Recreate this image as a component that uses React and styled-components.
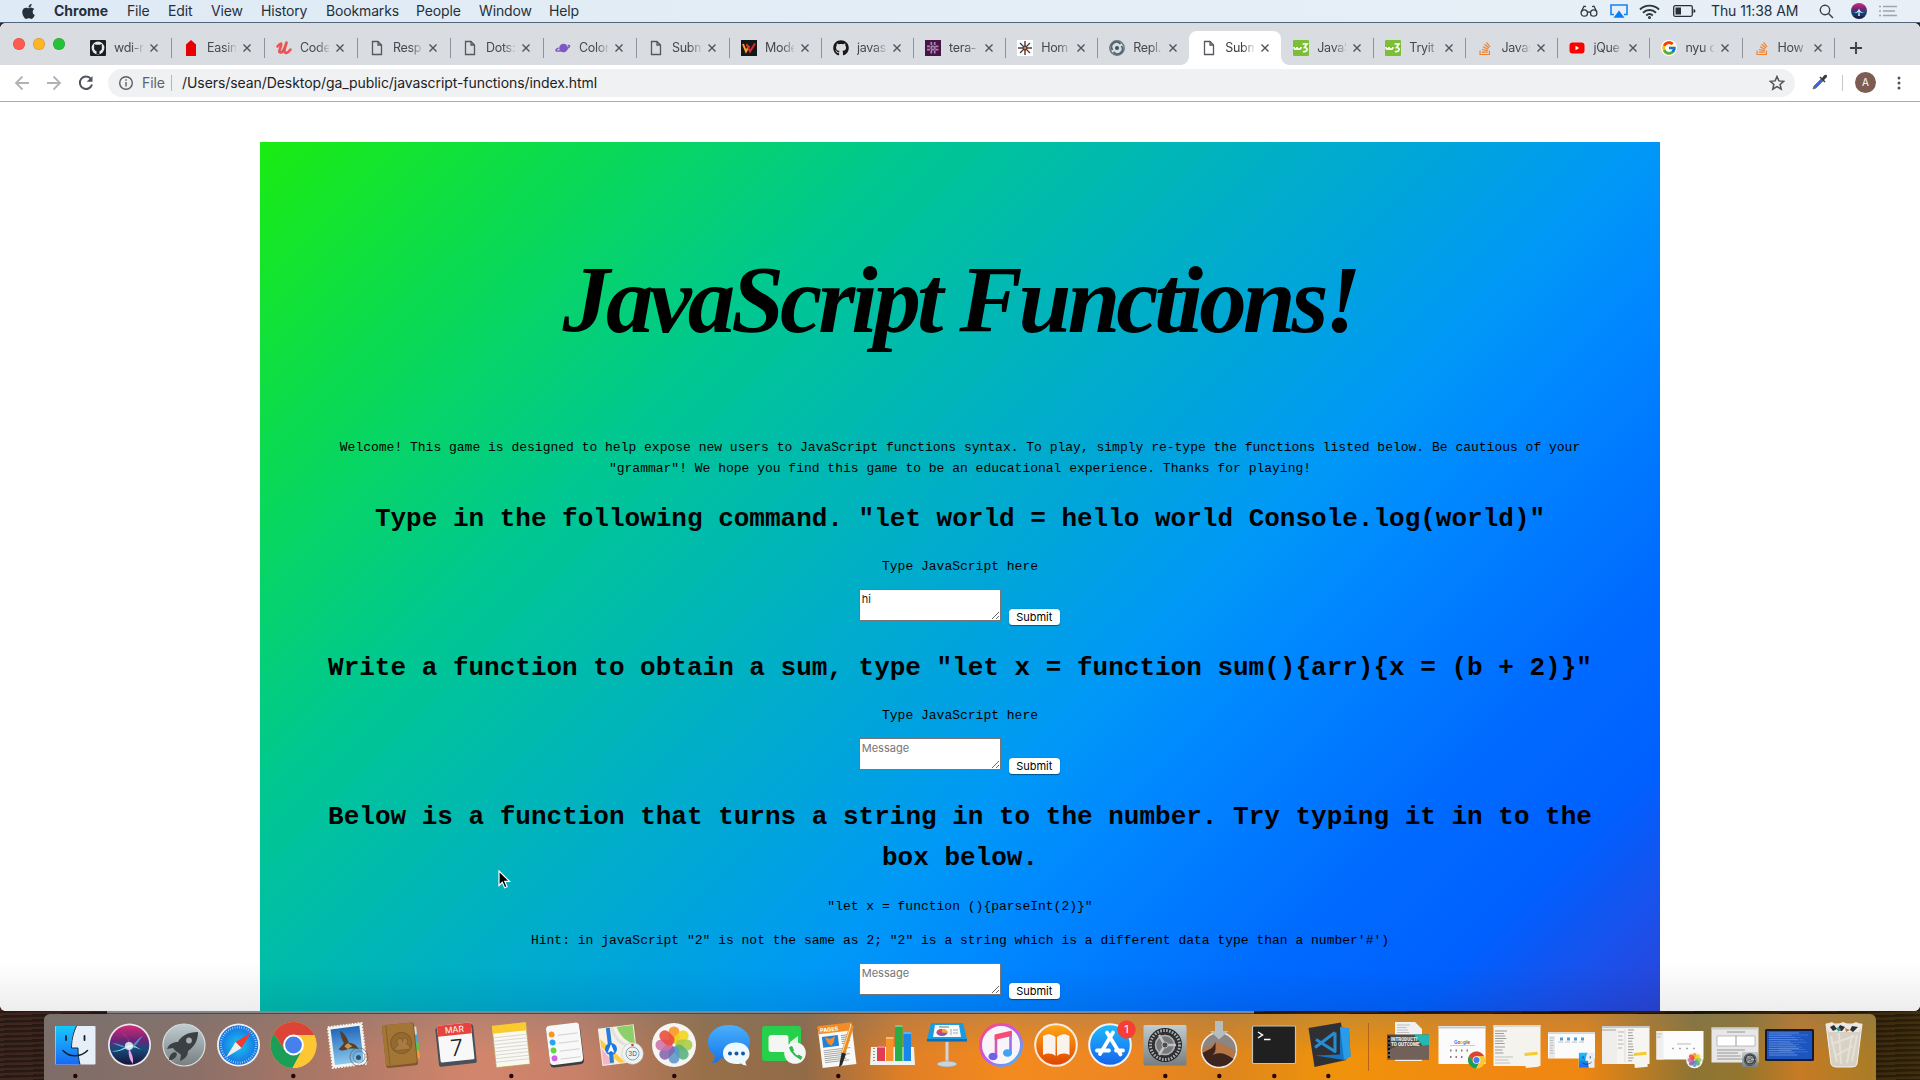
import React from "react";
import styled, { createGlobalStyle, css } from "styled-components";
import { FaApple, FaGithub, FaStackOverflow } from "react-icons/fa";
import { FcGoogle } from "react-icons/fc";

const sans = `Inter, Roboto, "Liberation Sans", sans-serif`;
const mono = `"Liberation Mono", "Courier New", monospace`;

const GlobalStyle = createGlobalStyle`
  * { box-sizing: border-box; }
  html, body { margin: 0; padding: 0; width: 1920px; height: 1080px; overflow: hidden; }
  svg { display: block; flex: none; }
`;

const Desktop = styled.div`
  width: 1920px;
  height: 1080px;
  display: flex;
  flex-direction: column;
  overflow: hidden;
  background:
    repeating-linear-gradient(178deg, rgba(0, 0, 0, 0.28) 0 2px, rgba(120, 70, 50, 0.12) 3px 5px),
    linear-gradient(90deg, #37231d 0, #2c1b16 160px, #3b2410 1100px, #241703 1600px, #2b2007 1800px, #3a2b0c 1920px);
  font-family: ${sans};
`;

const MenuBar = styled.header`
  height: 23px;
  flex: none;
  display: flex;
  align-items: center;
  padding: 0 23px 0 20px;
  border-bottom: 1px solid #50647a;
  background: linear-gradient(90deg, #deeaf5, #e3edf6 45%, #e8eff7);
  color: #25303c;
  font-size: 14px;
  line-height: 22px;
`;

const MenuItem = styled.span`
  width: ${(p) => p.$w}px;
  white-space: nowrap;
  font-weight: ${(p) => (p.$bold ? 700 : 400)};
  letter-spacing: ${(p) => p.$ls || 0}px;
`;

const Status = styled.div`
  margin-left: auto;
  display: flex;
  align-items: center;
`;

const Slot = styled.span`
  display: flex;
  width: ${(p) => p.$w}px;
  flex: none;
  align-items: center;
  white-space: nowrap;
`;

const Window = styled.section`
  height: 988px;
  flex: none;
  display: flex;
  flex-direction: column;
  overflow: hidden;
  border-radius: 6px;
  background: #fff;
`;

const TabStrip = styled.div`
  height: 42px;
  flex: none;
  display: flex;
  background: #d9dce1;
`;

const Lights = styled.div`
  width: 78px;
  flex: none;
  display: flex;
  gap: 8px;
  padding: 15px 0 0 13px;
`;

const Light = styled.i`
  width: 12px;
  height: 12px;
  border-radius: 50%;
  background: ${(p) => p.$c};
  box-shadow: inset 0 0 0 0.5px rgba(0, 0, 0, 0.2);
`;

const Tab = styled.div`
  width: ${(p) => p.$w}px;
  flex: none;
  display: flex;
  align-items: center;
  margin-top: 8px;
  height: 34px;
  padding: 0 10px 0 12px;
  position: relative;
  color: ${(p) => (p.$active ? "#3c4043" : "#45494e")};
  ${(p) =>
    p.$active &&
    css`
      background: #fff;
      border-radius: 8px 8px 0 0;
      &::before,
      &::after {
        content: "";
        position: absolute;
        bottom: 0;
        width: 8px;
        height: 8px;
      }
      &::before {
        left: -8px;
        background: radial-gradient(circle at 0 0, transparent 7.5px, #fff 8px);
      }
      &::after {
        right: -8px;
        background: radial-gradient(circle at 100% 0, transparent 7.5px, #fff 8px);
      }
    `}
`;

const TabTitle = styled.span`
  width: 29px;
  flex: none;
  margin: 0 7px 0 8px;
  white-space: nowrap;
  font-size: 12.5px;
  line-height: 18px;
  letter-spacing: -0.3px;
  mask-image: linear-gradient(90deg, #000 17px, rgba(0, 0, 0, 0.15) 29px);
`;

const Divider = styled.i`
  width: 1px;
  height: ${(p) => p.$h}px;
  margin: ${(p) => p.$m || "0"};
  flex: none;
  background: ${(p) => p.$c || "#8f9399"};
`;

const TabEdge = styled(Divider)`
  position: absolute;
  right: -1px;
  top: 7px;
`;

const NewTab = styled.div`
  padding: 19px 0 0 16px;
`;

const Toolbar = styled.div`
  height: 37px;
  flex: none;
  display: flex;
  align-items: center;
  padding: 0 14px 1px;
  border-bottom: 1px solid #a9abad;
`;

const NavIcons = styled.div`
  width: 94px;
  display: flex;
  gap: 16px;
`;

const AddressBar = styled.div`
  width: 1687px;
  height: 28px;
  display: flex;
  align-items: center;
  padding: 0 10px;
  border-radius: 14px;
  background: #eff1f3;
  font-size: 14px;
  color: #202124;
`;

const Scheme = styled.span`
  width: 29px;
  margin-left: 8px;
  color: #5f6368;
  letter-spacing: -0.1px;
`;

const Url = styled.span`
  flex: 1;
  margin-left: 10px;
  letter-spacing: ${(p) => p.$ls}px;
`;

const Avatar = styled.span`
  width: 21px;
  height: 21px;
  margin: 0 21px 0 12px;
  border-radius: 50%;
  background: #7d5d52;
  color: #fff;
  font-size: 10px;
  line-height: 21px;
  text-align: center;
`;

const Viewport = styled.main`
  flex: 1;
  min-height: 0;
  overflow: hidden;
  display: flex;
  justify-content: center;
  padding-top: 40px;
  background: linear-gradient(#fff 860px, #ededed 909px);
`;

const Game = styled.article`
  width: 1400px;
  height: 1400px;
  flex: none;
  text-align: center;
  color: #000;
  font-family: ${mono};
  background:
    linear-gradient(transparent 825px, rgba(0, 0, 0, 0.07) 869px),
    linear-gradient(135deg, #1aec12 0, #09d85a 260px, #00c890 460px, #00bbac 600px, #00b0c4 720px, #00a4dc 850px, #0099f6 975px, #0088ff 1090px, #006aff 1300px, #0060ff 1430px, #1b50ea 1530px, #2c42d2 1620px);
`;

const Title = styled.h1`
  margin: 0;
  height: 296px;
  padding-top: 100px;
  font: italic 700 95px/116px "Liberation Serif", serif;
  letter-spacing: ${(p) => p.$ls}px;
  white-space: nowrap;
`;

const Text = styled.p`
  margin: 0 0 13px;
  font-size: 13px;
  line-height: 20.8px;
`;

const Question = styled.h2`
  margin: 19px 0 17px;
  font-size: 26px;
  font-weight: 700;
  line-height: 41.6px;
`;

const Answer = styled.form`
  display: flex;
  justify-content: center;
  align-items: flex-end;
  height: 36.3px;
  gap: 8px;
  margin: -2px 0 22.3px;
  padding-right: 1.5px;
`;

const Field = styled.textarea`
  width: 142px;
  height: 32px;
  margin: 0 0 4px;
  padding: 2px;
  border: 1px solid #767676;
  border-radius: 0;
  background: #fff;
  color: #222;
  font: 11px/14px ${sans};
  overflow: hidden;
  &::placeholder { color: #757575; }
`;

const Submit = styled.button`
  width: 51px;
  height: 16px;
  padding: 0;
  border: 0;
  border-radius: 3.5px;
  background: #fff;
  box-shadow: 0 0.5px 1px rgba(0, 0, 0, 0.45);
  color: #000;
  font: 11px/16px ${sans};
`;

const Shelf = styled.div`
  height: 3px;
  flex: none;
  margin: 0 666px 0 107px;
  border-bottom: 1px solid #494a4c;
  background: #83868a;
`;

const Dock = styled.footer`
  width: 1832px;
  height: 66px;
  flex: none;
  display: flex;
  margin-left: 44px;
  padding-left: 3.75px;
  border-radius: 6px 6px 0 0;
  overflow: hidden;
  background:
    linear-gradient(rgba(110, 120, 120, 0.3), transparent 60%),
    linear-gradient(90deg, #7d6d68 0, #8b7068 150px, #ac7766 280px, #d2866c 430px, #c9816a 530px, #987048 660px, #916a48 760px, #e07f26 860px, #f48a1e 960px, #ed8723 1080px, #dd851e 1180px, #f0930a 1290px, #f08812 1450px, #ee8612 1540px, #8d7434 1650px, #94762d 1700px, #c77b24 1755px, #a87c27 1832px);
`;

const DockItem = styled.div`
  width: 54.5px;
  flex: none;
`;

const DockGap = styled.div`
  width: 25.2px;
  flex: none;
  display: flex;
  justify-content: center;
  padding-top: 9px;
`;

const Pointer = styled.div`
  position: absolute;
  left: 498px;
  top: 870px;
`;

/* ---------- favicons ---------- */
const FileIcon = () => (
  <svg width="16" height="16" viewBox="0 0 16 16" fill="none" stroke="#55595e" strokeWidth="1.3">
    <path d="M3.5 1.5h5.5l3.5 3.5v9.5h-9zM9 1.5V5h3.5" />
  </svg>
);
const StackIcon = () => <FaStackOverflow size={15} color="#f0812d" style={{ width: 16 }} />;
const W3Icon = () => (
  <svg width="16" height="16" viewBox="0 0 16 16">
    <rect width="16" height="16" rx="1" fill="#7cbf36" />
    <path d="M1 7c0 3 3 3 3 0 0 3 4 3 4 0M9.5 4h4.5l-2.5 3.5c4 0 3.5 5-1.5 4" fill="none" stroke="#fff" strokeWidth="1.6" />
  </svg>
);
const favicons = {
  gitBox: () => (
    <svg width="16" height="16" viewBox="0 0 16 16">
      <rect width="16" height="16" rx="1" fill="#1c1e21" />
      <circle cx="8" cy="8" r="6.4" fill="#e8e8e8" />
      <path d="M4.2 4l1.8.8h4L11.8 4v3c.7 3-1.4 3.8-2.3 4v3.2h-3V11C5 10.800 3.500 9.500 4.200 7z" fill="#1c1e21" />
    </svg>
  ),
  red: () => (
    <svg width="16" height="16" viewBox="0 0 16 16"><path d="M3 16V4.500L8 0l5 4.500V16z" fill="#e60000" /></svg>
  ),
  udemy: () => (
    <svg width="16" height="16" viewBox="0 0 16 16" fill="none" stroke="#ec5252" strokeWidth="2.500" strokeLinecap="round">
      <path d="M1.500 6.500C4 3 6 2.500 5 6c-1.500 4-3 7 0 6.500 3-1 4-6 5.500-10M10.500 3c-2 6-3 10-.5 10 1.500 0 3-1.500 4.500-3.500" />
    </svg>
  ),
  file: FileIcon,
  planet: () => (
    <svg width="16" height="16" viewBox="0 0 16 16">
      <circle cx="8.500" cy="8" r="4.300" fill="#7e57c2" />
      <path d="M3.500 8C-1 10.500.5 12 7 10.500S17 5 12.800 5.600" fill="none" stroke="#7e57c2" strokeWidth="1.500" />
    </svg>
  ),
  w: () => (
    <svg width="16" height="16" viewBox="0 0 16 16">
      <rect width="16" height="16" fill="#151719" />
      <path d="M2 4l3 7.500L8 6" fill="none" stroke="#f9a32a" strokeWidth="2" />
      <path d="M5.500 4L9 11.500 14 3.500" fill="none" stroke="#e32b2b" strokeWidth="2" />
    </svg>
  ),
  git: () => <FaGithub size={16} color="#191717" />,
  slack: () => (
    <svg width="16" height="16" viewBox="0 0 16 16">
      <rect width="16" height="16" fill="#481449" />
      <path d="M6.300 2v12M9.700 2v12M2 6.300h12M2 9.700h12" stroke="#a988aa" strokeWidth="1.700" strokeDasharray="3 1.200" />
    </svg>
  ),
  star: () => (
    <svg width="16" height="16" viewBox="0 0 16 16">
      <rect width="16" height="16" fill="#fff" />
      <path d="M8 1v14M1 8h14" stroke="#6b3733" strokeWidth="1.500" />
      <path d="M3 3l10 10M13 3L3 13" stroke="#343d50" strokeWidth="1.300" />
      <circle cx="8" cy="8" r="2" fill="#c9823a" stroke="#333" />
    </svg>
  ),
  repl: () => (
    <svg width="16" height="16" viewBox="0 0 16 16" fill="none">
      <circle cx="8" cy="8" r="7.200" stroke="#667881" strokeWidth="1.500" />
      <path d="M3.500 10a5 5 0 0 1 8-6M12.500 6a5 5 0 0 1-8 6" stroke="#526771" strokeWidth="2" />
      <circle cx="8" cy="8" r="2" fill="#3d525c" />
    </svg>
  ),
  w3: W3Icon,
  stack: StackIcon,
  youtube: () => (
    <svg width="16" height="16" viewBox="0 0 16 16">
      <rect x=".5" y="2.500" width="15" height="11" rx="3" fill="#f00" />
      <path d="M6.500 5.800v4.400L10.200 8z" fill="#fff" />
    </svg>
  ),
  google: () => (
    <Slot $w={16}><FcGoogle size={16} style={{ background: "#fff", borderRadius: "50%" }} /></Slot>
  ),
};

const tabs = [
  ["gitBox", "wdi-r"], ["red", "Easin"], ["udemy", "Code"], ["file", "Resp"], ["file", "Dots:"],
  ["planet", "Color"], ["file", "Subm"], ["w", "Mode"], ["git", "javas"], ["slack", "tera-"],
  ["star", "Hom"], ["repl", "Repl."], ["file", "Subm"], ["w3", "JavaS"], ["w3", "Tryit"],
  ["stack", "Javas"], ["youtube", "jQue"], ["google", "nyu c"], ["stack", "How"],
];

const CloseIcon = () => (
  <svg width="8" height="8" viewBox="0 0 8 8" stroke="#4f5358" strokeWidth="1.400">
    <path d="M.5.5l7 7M7.500.5l-7 7" />
  </svg>
);

/* ---------- dock artwork, drawn on a 54 x 66 cell ---------- */
const Cell = ({ children, dot }) => (
  <svg width="54" height="66" viewBox="0 0 54 66">
    {children}
    {dot && <circle cx="27.300" cy="62" r="2.200" fill="#250505" />}
  </svg>
);

const FinderArt = () => (
  <g>
    <rect x="7" y="12" width="40.500" height="38.500" rx="1" fill="#e6eef8" />
    <path d="M7.500 12H28c-4 8-5 16-5 22h7c0 6 .5 11 2 16.500H7.500z" fill="url(#finder)" />
    <path d="M28.500 12c-4 8-5 16-5 22h6.500c0 6 .5 11 2 16.500" fill="none" stroke="#12283d" strokeWidth="1" />
    <path d="M18 22v4M36.500 22v4" stroke="#102030" strokeWidth="1.800" strokeLinecap="round" />
    <path d="M15 36.500c6 7 18 7 24.500 0" fill="none" stroke="#102030" strokeWidth="1.500" strokeLinecap="round" />
  </g>
);

const ChromeArt = ({ cx = 27.5, cy = 31, s = 1 }) => (
  <g transform={`translate(${cx} ${cy}) scale(${s})`}>
    <circle r="23" fill="#fbc02d" />
    <path d="M-19.900-11.500A23 23 0 0 1 19.900-11.500 23 23 0 0 1 20.700-10H0L-8.700 5z" fill="#dc4437" />
    <path d="M-19.900-11.500A23 23 0 0 0-1 23L8.700 5-8.700 5z" fill="#1b9e58" />
    <path d="M-1 23A23 23 0 0 0 20.700-10H0L8.700 5z" fill="#fdc734" />
    <circle r="10.400" fill="#fff" />
    <circle r="8.400" fill="#4580ee" />
  </g>
);

const petals = ["#f7941e", "#f0d51b", "#a8cb45", "#55b37a", "#5b96c9", "#8364ae", "#cf6fa7", "#eb4b3c"];
const PhotosArt = ({ cx = 27, cy = 31, s = 1 }) => (
  <g transform={`translate(${cx} ${cy}) scale(${s})`}>
    <circle r="22" fill="#f5f5f3" />
    {petals.map((c, i) => (
      <rect key={c} x="-5.500" y="-18.500" width="11" height="17" rx="5.500" fill={c} opacity=".88" transform={`rotate(${i * 45})`} />
    ))}
  </g>
);

const GearArt = ({ cx = 27, cy = 31, s = 1 }) => (
  <g transform={`translate(${cx} ${cy}) scale(${s})`}>
    <rect x="-21.500" y="-20" width="43" height="40.500" rx="1.500" fill="url(#steel)" />
    <circle r="17" fill="#222426" />
    <circle r="14.500" fill="none" stroke="#aaa" strokeWidth="3" strokeDasharray="1.700 1.300" />
    <circle r="11.500" fill="#77797b" stroke="#303234" strokeWidth="2.500" />
    <circle r="9.500" fill="none" stroke="#b0b2b4" strokeWidth="1.500" />
    <path d="M0 0H11M0 0L-6-10M0 0L-6 10" stroke="#c0c2c4" strokeWidth="2.500" />
    <circle r="3" fill="#4b4d50" stroke="#bbb" />
  </g>
);

const NoteBadge = ({ x, y }) => (
  <g transform={`translate(${x} ${y}) rotate(-5)`}>
    <rect width="13" height="15" fill="#f5f4ed" />
    <rect width="13" height="3" fill="#f7cb2f" />
  </g>
);

const Lines = ({ x, y, n, w, gap = 3, c = "#aaa" }) => (
  <path
    d={Array.from({ length: n }, (_, i) => `M${x} ${y + i * gap}h${w - ((i * 5) % 7) * (w / 20)}`).join("")}
    stroke={c}
    strokeWidth=".7"
  />
);

const apps = [
  { dot: true, art: <FinderArt /> },
  {
    art: (
      <g>
        <circle cx="27.500" cy="31" r="21.500" fill="#e9e9ef" />
        <circle cx="27.500" cy="31" r="19.800" fill="url(#siri)" />
        <path d="M9 37c10 1 15-6 20-6s8 5 16 6c-7-1-10-4-16-4s-10 6-20 4z" fill="#8df5ee" />
        <path d="M20 19c6 3 7 8 7 13s5 8 4 18c-4-5-5-10-4-17s-2-11-7-14z" fill="#eba3e3" />
        <path d="M10 29c8 0 12 5 18 3s7-8 13-10c-5 5-7 12-13 12s-12-2-18-5z" fill="#53a8e8" opacity=".75" />
        <circle cx="27" cy="32" r="4" fill="#fff" opacity=".8" />
      </g>
    ),
  },
  {
    art: (
      <g>
        <circle cx="27" cy="31" r="21" fill="url(#steel)" stroke="#dce0e2" strokeWidth="1.200" />
        <path d="M41 18c-10 0-17 4-20 10-5 0-9 2-11 7l6-1c1 1 2 3 4 4s3 2 4 3l-1 6c5-2 8-5 8-10 6-4 10-10 10-19z" fill="#3b4043" />
        <circle cx="32" cy="26.500" r="2.900" fill="#a7afb2" />
        <path d="M18 38c-4 1-6 4-6 8 4 0 7-2 8-6z" fill="#3b4043" />
      </g>
    ),
  },
  {
    art: (
      <g>
        <circle cx="27.500" cy="31" r="21.500" fill="#eef1f3" />
        <circle cx="27.500" cy="31" r="19.700" fill="url(#safari)" />
        <circle cx="27.500" cy="31" r="17.700" fill="none" stroke="#b9e3fa" strokeWidth="2.200" strokeDasharray=".7 1.620" />
        <path d="M40 18.500L30.500 34 24.500 28z" fill="#f13a32" />
        <path d="M15 43.500L30.500 34 24.500 28z" fill="#eee" />
      </g>
    ),
  },
  { dot: true, art: <ChromeArt /> },
  {
    art: (
      <g>
        <g transform="rotate(-7 27 30)">
          <rect x="10" y="11" width="34" height="41" fill="#f4f4f1" stroke="#f4f4f1" strokeWidth="2" strokeDasharray="1.800 1.200" />
          <rect x="12.500" y="13.500" width="29" height="36" fill="url(#mail)" />
          <path d="M22 16c4 3 6 8 7 13 5 1 8 4 9 8-4-2-7-2-10-2-4 1-7 2-10-1 3-2 4-3 6-5-1-4-3-8-2-13z" fill="#5a3f24" />
          <path d="M24 32l4-3 4 4-5 2z" fill="#c49752" />
        </g>
        <circle cx="39" cy="43" r="9" fill="none" stroke="#55606a" strokeOpacity=".65" />
        <circle cx="39" cy="43" r="6" fill="none" stroke="#55606a" strokeOpacity=".55" />
        <circle cx="38.500" cy="43.500" r="2.500" fill="#35506d" />
      </g>
    ),
  },
  {
    art: (
      <g transform="rotate(-6 27 31)">
        <path d="M39 14h4v9h-4z" fill="#d3d9dc" /><path d="M39 22h4.500v8H39z" fill="#3fa9de" />
        <path d="M39 30h4.500v8H39z" fill="#4fca57" /><path d="M39 38h4.500v8H39z" fill="#efa126" />
        <rect x="9" y="9.500" width="32" height="43" rx="2.500" fill="#7e5728" />
        <rect x="9" y="9.500" width="31" height="41" rx="2.500" fill="#a37636" />
        <path d="M13 10v40" stroke="#85602d" />
        <circle cx="26.500" cy="29" r="10.500" fill="#956a31" stroke="#815b29" />
        <path d="M19 36c0-4 4-4 4-6-3-5 5-9 5-2 0-7 7-3 4 2 0 2 3 2 3 6z" fill="#a87b42" stroke="#7d5728" strokeWidth=".7" />
      </g>
    ),
  },
  {
    art: (
      <g transform="rotate(-6 27 31)">
        <rect x="8" y="12" width="38" height="39" rx="2" fill="#48505a" />
        <rect x="10" y="10" width="34" height="37" rx="1.500" fill="#f8f8f8" />
        <path d="M10 11.500q0-1.500 1.500-1.500h31q1.500 0 1.500 1.500V21H10z" fill="#e7433d" />
        <text x="27" y="18.500" fontFamily="Inter, sans-serif" fontSize="8.500" textAnchor="middle" fill="#fff">MAR</text>
        <text x="27.500" y="42" fontFamily="Inter, sans-serif" fontSize="23" fontWeight="300" textAnchor="middle" fill="#222">7</text>
      </g>
    ),
  },
  {
    dot: true,
    art: (
      <g transform="rotate(-6 27 31)">
        <rect x="10" y="10" width="34" height="42" fill="#f9f8f1" stroke="#b79b46" strokeWidth=".7" />
        <rect x="10" y="10" width="34" height="8" fill="#fbca2c" />
        <path d="M10 22h34M10 25.500h34M10 29h34M10 32.500h34M10 36h34M10 39.500h34M10 43h34M10 46.500h34" stroke="#d0d0ce" strokeWidth=".8" />
      </g>
    ),
  },
  {
    art: (
      <g transform="rotate(-7 27 31)">
        <rect x="10" y="11" width="34" height="41" rx="4" fill="#3c3d40" />
        <rect x="10" y="10" width="33.500" height="39.500" rx="4" fill="#f8f8f8" />
        <circle cx="15" cy="19" r="3" fill="#fd9420" /><circle cx="15" cy="27" r="3" fill="#29a5ef" />
        <circle cx="15" cy="35" r="3" fill="#5dd742" /><circle cx="15" cy="43" r="3" fill="#cb65e7" />
        <path d="M21 20.500h20M21 28.500h20M21 36.500h20M21 44.500h20" stroke="#c9c9c9" strokeWidth=".8" />
      </g>
    ),
  },
  {
    art: (
      <g>
        <g transform="rotate(-7 24 31)">
          <rect x="7" y="12.500" width="36" height="37.500" fill="#f5f0e5" />
          <path d="M26 13h16v19c-7-2-14-9-16-19z" fill="#8cd06a" />
          <path d="M8 20v12l11 17H8z" fill="#f6b6c4" /><path d="M8 23l22 26h-6L8 31z" fill="#ffcc3f" />
          <path d="M15 13v35h4V13z" fill="#277ed8" /><path d="M21 13c1 12 9 20 22 23" stroke="#e3e1dc" strokeWidth="3" fill="none" />
        </g>
        <circle cx="18" cy="35" r="6" fill="#1c78e6" /><path d="M18 30l3.500 9-3.500-2-3.500 2z" fill="#fff" />
        <circle cx="39.500" cy="39.500" r="10.700" fill="#f0f1f2" stroke="#c4c6c8" strokeWidth=".6" />
        <circle cx="39.500" cy="39.500" r="6.500" fill="none" stroke="#86a5b0" />
        <text x="39.500" y="42" fontFamily="Inter, sans-serif" fontSize="6.500" textAnchor="middle" fill="#555">3D</text>
        <circle cx="39.500" cy="31" r="1.300" fill="#e23b32" />
      </g>
    ),
  },
  { dot: true, art: <PhotosArt /> },
  {
    art: (
      <g>
        <path d="M27 11c12 0 21 7.500 21 17s-9 17-21 17c-3 0-5 0-8-1-2 3-5 5-9 5 2-2 3-5 3-8-5-3-7-8-7-13 0-9.500 9-17 21-17z" fill="url(#bubble)" />
        <path d="M34 28.500c8 0 13.500 4.500 13.500 11 0 3-1 5.500-4 8 0 2 .5 3 1.500 4-3 0-4.500-1-6-2-9 2-18-2-18-10 0-6.500 5-11 13-11z" fill="#eef8ff" />
        <circle cx="28" cy="39.500" r="2" fill="#145aa5" /><circle cx="34.500" cy="39.500" r="2" fill="#145aa5" /><circle cx="41" cy="39.500" r="2" fill="#145aa5" />
      </g>
    ),
  },
  {
    art: (
      <g>
        <rect x="6" y="12" width="39" height="35" rx="3" fill="#27d04c" />
        <rect x="12.500" y="21" width="20" height="17" rx="3" fill="#f4f6f3" /><path d="M34 28l8-6v14l-8-5z" fill="#e3f0e2" />
        <circle cx="39" cy="39" r="10.800" fill="#f5f5f5" />
        <path d="M34.500 33.500c2 6 5 9 10 10.500" fill="none" stroke="#29bd48" strokeWidth="2" />
        <path d="M33.500 33.500l2.500-1 1.500 4-2 1.500zM41 42.500l1.500-1.500 3.500 2-1.500 2.500z" fill="#29bd48" stroke="#29bd48" strokeLinejoin="round" />
      </g>
    ),
  },
  {
    dot: true,
    art: (
      <g>
        <g transform="rotate(-7 27 31)">
          <rect x="9" y="11" width="34" height="41" fill="#f8f8f6" /><rect x="9" y="10" width="34" height="8" fill="#f28c28" />
          <text x="11" y="16.500" fontFamily="Inter, sans-serif" fontSize="5.500" fontWeight="700" fill="#fff">PAGES</text>
          <rect x="12" y="21" width="16" height="11" fill="#2382d4" /><path d="M15 22l5 2 5-2-2 6-3 3-3-3z" fill="#f58a2b" />
          <Lines x={31} y={22} n={5} w={9} gap={2} c="#777" /><Lines x={12} y={35} n={7} w={27} gap={2} c="#888" />
        </g>
        <path d="M39 10l4 2-9 29-4 8 0-10z" fill="#e88e25" /><path d="M31 38l4 2-4 11-3 2 1-6z" fill="#282828" /><path d="M39 10l1 1-9 28" fill="none" stroke="#ffe0a0" />
      </g>
    ),
  },
  {
    art: (
      <g>
        <path d="M6 33h43l1 18H5z" fill="#f1f1ef" /><path d="M9 34v15" stroke="#777" strokeWidth="1.500" strokeDasharray="1 2" />
        <rect x="12" y="32" width="8" height="15" fill="#e13c52" /><rect x="21" y="23" width="7.500" height="24" fill="#f6922b" />
        <rect x="30" y="11" width="7.500" height="36" fill="#28ae47" /><rect x="38.500" y="18" width="7.500" height="29" fill="#1887e8" />
        <path d="M12 32h8v2h-8zM21 23h7.500v2H21zM30 11h7.500v2H30zM38.500 18H46v2h-7.500z" fill="#fff" opacity=".35" />
      </g>
    ),
  },
  {
    art: (
      <g>
        <path d="M11 9h32l4 16H7z" fill="#199be0" /><path d="M7 25h40v2.500H7z" fill="#0c6db0" />
        <path d="M15 11h24l2 12H13z" fill="#f6f9fa" /><path d="M19 13h10" stroke="#777" />
        <ellipse cx="22" cy="18.500" rx="5.500" ry="3.500" fill="#8a54bd" /><path d="M22 18.500v-3.500c4 0 6 2 5.500 4z" fill="#f6a82c" /><path d="M22 18.500l-5 1c-1-3 2-4.500 5-4.500z" fill="#e74457" />
        <path d="M31 15v6M33 16h5M33 19h5" stroke="#aaa" />
        <path d="M25.500 28h3v22h-3z" fill="#cfd5da" /><ellipse cx="27" cy="50" rx="10" ry="3" fill="#cbd3d9" stroke="#8f989e" strokeWidth=".6" />
      </g>
    ),
  },
  {
    art: (
      <g>
        <circle cx="27" cy="31" r="20.500" fill="#f7f5f9" stroke="url(#tunes)" strokeWidth="3" />
        <path d="M36.500 18v21" stroke="#9a6fe8" strokeWidth="2.600" /><path d="M22 21v21" stroke="#d458b0" strokeWidth="2.600" />
        <path d="M20.700 20.500l17.100-4v5.500l-17.100 4z" fill="#f64d77" />
        <ellipse cx="19" cy="42.500" rx="4.500" ry="3.800" fill="#7160ed" /><ellipse cx="33.500" cy="39" rx="4.500" ry="3.800" fill="#40a3f3" />
      </g>
    ),
  },
  {
    art: (
      <g>
        <circle cx="27" cy="31" r="20.800" fill="url(#books)" stroke="#f6eee5" strokeWidth="2" />
        <path d="M14 22c5-3 9-2 12.500 1v19c-4-3-8-3-12.500-1zM40.500 22c-5-3-9-2-12.500 1v19c4-3 8-3 12.500-1z" fill="#f8f3ec" />
      </g>
    ),
  },
  {
    art: (
      <g>
        <circle cx="27" cy="31" r="20.800" fill="url(#store)" stroke="#edf5fb" strokeWidth="2" />
        <path d="M24 18.500l13.500 22M30 18.500L17 40M14 36.500h12M33 36.500h7" stroke="#fff" strokeWidth="3.800" strokeLinecap="round" />
        <circle cx="43.500" cy="15.500" r="9.200" fill="#f63e36" />
        <text x="43.500" y="19.300" fontFamily="Inter, sans-serif" fontSize="11" textAnchor="middle" fill="#fff">1</text>
      </g>
    ),
  },
  { dot: true, art: <GearArt /> },
  {
    dot: true,
    art: (
      <g>
        <circle cx="27" cy="36" r="17.500" fill="#8b8583" stroke="#eeeae7" strokeWidth="1.500" />
        <path d="M10.200 35c5-2 9-3 13-7 7 1 14 5 20.500 9a17 17 0 0 1-33 2z" fill="#b57648" />
        <path d="M10.500 39c6-4 10-3 13-11 0 6 1 10-3 13 7-3 13-2 21 4-8 11-26 11-31-6z" fill="#3d251d" />
        <path d="M23 7h8v10h5.500L27 25.500 18 17h5z" fill="#b6bdbf" />
      </g>
    ),
  },
  {
    dot: true,
    art: (
      <g>
        <rect x="5.500" y="12" width="43" height="37.500" rx="1" fill="#202020" stroke="#c6c2b8" strokeWidth="1.200" />
        <path d="M11 18l4.500 3-4.500 3" fill="none" stroke="#fff" strokeWidth="1.500" /><path d="M17 25.500h6.500" stroke="#fff" strokeWidth="1.500" />
      </g>
    ),
  },
  {
    dot: true,
    art: (
      <g>
        <path d="M7.500 14L40 8.500 45 46 13.500 53z" fill="#303034" />
        <path d="M39 13l9 1.500 1.500 28L43 46l-29-4.500 25-1z" fill="#1476c4" /><path d="M39 13l9 1.500 1.500 28L43 46z" fill="#289be9" />
        <path d="M34 18.500v19L15 25.500M34 18.500L14 33.500" fill="none" stroke="#268dd2" strokeWidth="3" strokeLinejoin="round" />
      </g>
    ),
  },
];

const recents = [
  <g key="doc">
    <path d="M14 8h20l7 7v32H14z" fill="#eff0ef" /><Lines x={16} y={11} n={4} w={13} gap={2.5} />
    <rect x="6" y="20.500" width="42" height="25" fill="#514b48" /><path d="M33 20.500h15v20z" fill="#25b7b2" />
    <path d="M6 37l14-7 10 3 18-2v14.500H6z" fill="#716158" /><path d="M8 22v22" stroke="#111" strokeWidth="2" strokeDasharray="2 2" />
    <text x="10" y="27" fontFamily="Roboto, sans-serif" fontSize="4.500" fontWeight="900" fill="#eee">INTRODUCTI</text>
    <text x="10" y="32" fontFamily="Roboto, sans-serif" fontSize="4.500" fontWeight="900" fill="#eee">TO OUTCOME</text>
  </g>,
  <g key="google">
    <rect x="3.500" y="12" width="47" height="38" fill="#fbfbfb" /><path d="M3.500 13.500h47" stroke="#c7c9cc" strokeWidth="2" />
    <text x="27" y="29.500" fontFamily="Roboto, sans-serif" fontSize="5" fontWeight="700" textAnchor="middle"><tspan fill="#4285f4">G</tspan><tspan fill="#ea4335">o</tspan><tspan fill="#fbbc05">o</tspan><tspan fill="#4285f4">g</tspan><tspan fill="#34a853">l</tspan><tspan fill="#ea4335">e</tspan></text>
    <path d="M15 31.500h25" stroke="#ccc" /><path d="M15 36.500h22M15 43h15" stroke="#8f7777" strokeWidth="1.800" strokeDasharray="1.500 4" />
    <ChromeArt cx={41.5} cy={46} s={0.37} />
  </g>,
  <g key="note1">
    <rect x="3.500" y="11" width="47" height="41" fill="#f4f3ee" /><path d="M3.500 12h47" stroke="#d9d8d3" strokeWidth="2" />
    <Lines x={5} y={17} n={6} w={12} gap={2.5} c="#777" /><Lines x={5} y={33} n={3} w={10} c="#777" /><Lines x={5} y={43} n={3} w={18} c="#aaa" /><NoteBadge x={34.500} y={39} />
  </g>,
  <g key="finder">
    <rect x="4" y="18" width="47" height="26.500" fill="#fbfbfb" /><path d="M4 19h47" stroke="#d8d8d8" strokeWidth="2" /><path d="M5 22h6v22H5z" fill="#e9e9e9" />
    <Lines x={6} y={24} n={7} w={4} gap={2.5} /><path d="M16 25h3M23 25h3M30 25h3M37 25h3" stroke="#559ad0" strokeWidth="3" /><path d="M14 28h28" stroke="#aaa" strokeDasharray="5 2" strokeWidth=".7" />
    <g transform="translate(32 34) scale(.39)"><FinderArt /></g>
  </g>,
  <g key="note2">
    <rect x="3" y="12" width="47.500" height="38" fill="#f6f5f1" /><rect x="3" y="12" width="15" height="38" fill="#efeeeb" /><path d="M3 13h47M3 16h14" stroke="#c8c8c4" strokeWidth="2" />
    <path d="M26 15v34" stroke="#ddd" /><Lines x={19} y={18} n={5} w={6} gap={4} c="#999" /><Lines x={29} y={16} n={12} w={6} gap={2.8} c="#777" /><NoteBadge x={34.500} y={39} />
  </g>,
  <g key="photos">
    <rect x="3.500" y="17" width="47" height="28.500" fill="#fcfcfc" /><rect x="3.500" y="17" width="7" height="28.500" fill="#efefef" /><Lines x={4} y={20} n={2} w={5} />
    <path d="M24 30h14" stroke="#bbb" /><path d="M19 34.500h25" stroke="#aaa" strokeWidth="1.500" strokeDasharray="2 5" /><PhotosArt cx={41.500} cy={46} s={0.38} />
  </g>,
  <g key="prefs">
    <rect x="3.500" y="13.500" width="47" height="35" fill="#e7e7e7" /><path d="M3.500 14.500h47" stroke="#cbcbcb" strokeWidth="2" />
    <path d="M9 22h38v10H9z" fill="#fff" stroke="#999" strokeWidth=".6" /><path d="M28 22v10" stroke="#999" /><Lines x={19} y={18} n={1} w={18} c="#777" /><Lines x={9} y={36} n={4} w={28} gap={3} c="#777" /><GearArt cx={42} cy={45.500} s={0.37} />
  </g>,
  <g key="terminal">
    <rect x="3" y="15" width="49" height="32" rx="1.500" fill="#121b34" /><rect x="5" y="17" width="45" height="28" fill="#1c54c0" />
    <Lines x={7} y={19} n={11} w={30} gap={2.2} c="#7ca5ea" /><Lines x={17} y={21} n={8} w={29} gap={2.4} c="#4b7fd8" />
  </g>,
  <g key="trash">
    <path d="M9 10h36l-5 40q-.5 3-5 3H19q-4 0-5-3z" fill="#dcdad5" fillOpacity=".9" stroke="#f1f1ee" />
    <path d="M9 10l6-2 4 3 7-3 7 3 6-3 6 3-3 7H12z" fill="#ece9e2" /><path d="M13 13l4-2 3 4-4 2zM23 11l5 2-3 4-5-1zM35 12l6 1-5 5-3-2z" fill="#2c2f33" /><path d="M20 13l4 2-3 3z" fill="#28a69d" /><path d="M28 14l5 2-4 2z" fill="#c57b41" />
    <path d="M14 22l6 26M22 19l2 31M35 21l-5 28M40 21l-5 26M14 30l24-8M18 42l18-10" stroke="#fff" strokeOpacity=".35" strokeWidth="2" />
  </g>,
];

const Gradients = () => (
  <svg width="0" height="0" style={{ position: "absolute" }}>
    <defs>
      <linearGradient id="finder" x2="0" y2="1"><stop stopColor="#18c8ff" /><stop offset="1" stopColor="#1769f4" /></linearGradient>
      <linearGradient id="steel" x2="0" y2="1"><stop stopColor="#c0cdd2" /><stop offset="1" stopColor="#777e80" /></linearGradient>
      <linearGradient id="siri" x2="0" y2="1"><stop stopColor="#d22c75" /><stop offset=".38" stopColor="#6d2377" /><stop offset=".6" stopColor="#174a7c" /><stop offset="1" stopColor="#181238" /></linearGradient>
      <radialGradient id="safari"><stop stopColor="#19c7f3" /><stop offset="1" stopColor="#1770df" /></radialGradient>
      <linearGradient id="mail" x2="0" y2="1"><stop stopColor="#2268bb" /><stop offset="1" stopColor="#8cc9ed" /></linearGradient>
      <linearGradient id="bubble" x2="0" y2="1"><stop stopColor="#4ab0fb" /><stop offset="1" stopColor="#1475ec" /></linearGradient>
      <linearGradient id="tunes" x2="1" y2="1"><stop stopColor="#ff4768" /><stop offset=".5" stopColor="#c45bec" /><stop offset="1" stopColor="#2cc5fb" /></linearGradient>
      <linearGradient id="books" x2="0" y2="1"><stop stopColor="#ffa915" /><stop offset="1" stopColor="#df4301" /></linearGradient>
      <linearGradient id="store" x2="0" y2="1"><stop stopColor="#1ebcfb" /><stop offset="1" stopColor="#1562ed" /></linearGradient>
    </defs>
  </svg>
);

const menus = [["File", 41], ["Edit", 43], ["View", 50], ["History", 65], ["Bookmarks", 90], ["People", 63], ["Window", 70], ["Help", 40]];

function Entry({ value }) {
  return (
    <Answer onSubmit={(e) => e.preventDefault()}>
      <Field placeholder="Message" defaultValue={value} spellCheck={false} />
      <Submit>Submit</Submit>
    </Answer>
  );
}

export default function App() {
  return (
    <Desktop>
      <GlobalStyle />
      <Gradients />
      <MenuBar>
        <Slot $w={34}><FaApple size={17} /></Slot>
        <MenuItem $w={73} $bold $ls={0}>Chrome</MenuItem>
        {menus.map(([label, w]) => <MenuItem key={label} $w={w} $ls={-0.15}>{label}</MenuItem>)}
        <Status>
          <Slot $w={30}>
            <svg width="18" height="12" viewBox="0 0 18 12" fill="none" stroke="#303944" strokeWidth="1.300">
              <circle cx="4.300" cy="8" r="3.200" /><circle cx="13.700" cy="8" r="3.200" /><path d="M7.500 7.500q1.500-1.200 3 0M1.200 7L4 1.200l2 .5M16.800 7L14 1.200l-2 .5" />
            </svg>
          </Slot>
          <Slot $w={29}>
            <svg width="18" height="14" viewBox="0 0 18 14">
              <path d="M4 10.500H1V1h16v9.500h-3" fill="none" stroke="#1583f7" strokeWidth="1.600" /><path d="M9 6.500l5.500 7.300h-11z" fill="#0a7cf5" />
            </svg>
          </Slot>
          <Slot $w={34}>
            <svg width="21" height="15" viewBox="0 0 21 15" fill="none" stroke="#2b343e" strokeWidth="1.900">
              <path d="M1 5.500a13.500 13.500 0 0 1 19 0M4 8.700a9.300 9.300 0 0 1 13 0M7.200 11.500a5 5 0 0 1 6.600 0" /><circle cx="10.500" cy="13.500" r=".6" />
            </svg>
          </Slot>
          <Slot $w={38}>
            <svg width="23" height="12" viewBox="0 0 23 12">
              <rect x=".7" y=".7" width="18.600" height="10.600" rx="1.500" fill="none" stroke="#27303a" strokeWidth="1.300" /><path d="M2.500 2.500h5.500v7H2.500z" fill="#27303a" /><path d="M20.500 4q2 .5 2 2t-2 2z" fill="#27303a" />
            </svg>
          </Slot>
          <Slot $w={108}><MenuItem $ls={-0.1}>Thu 11:38 AM</MenuItem></Slot>
          <Slot $w={32}>
            <svg width="15" height="15" viewBox="0 0 15 15" fill="none" stroke="#37414c" strokeWidth="1.400"><circle cx="6" cy="6" r="4.700" /><path d="M9.500 9.500l4.500 4.500" /></svg>
          </Slot>
          <Slot $w={28}>
            <svg width="16" height="16" viewBox="0 0 16 16"><circle cx="8" cy="8" r="8" fill="url(#siri)" /><path d="M2 10q4 0 6-4 2 4 6 4-4 0-6-1-2 1-6 1" fill="#d8f5ff" /><path d="M8 5l1 8H7z" fill="#b3d9ff" /></svg>
          </Slot>
          <Slot $w={18}>
            <svg width="18" height="12" viewBox="0 0 18 12" stroke="#9ca5ae" strokeWidth="1.500"><path d="M0 1.500h2M4 1.500h14M0 6h2M4 6h12M0 10.500h2M4 10.500h14" /></svg>
          </Slot>
        </Status>
      </MenuBar>

      <Window>
        <TabStrip>
          <Lights><Light $c="#ff5a51" /><Light $c="#fdb528" /><Light $c="#25c138" /></Lights>
          {tabs.map(([icon, label], i) => {
            const Icon = favicons[icon];
            return (
              <Tab key={i} $w={i < 7 ? 93 : 92.05} $active={i === 12}>
                <Icon />
                <TabTitle>{label}</TabTitle>
                <CloseIcon />
                {i !== 11 && i !== 12 && <TabEdge $h={20} />}
              </Tab>
            );
          })}
          <NewTab>
            <svg width="12" height="12" viewBox="0 0 12 12" stroke="#3c4043" strokeWidth="1.900"><path d="M6 0v12M0 6h12" /></svg>
          </NewTab>
        </TabStrip>
        <Toolbar>
          <NavIcons>
            <svg width="16" height="16" viewBox="0 0 16 16" fill="none" stroke="#b0b2b5" strokeWidth="1.800"><path d="M15 8H2M8.500 1.500L2 8l6.500 6.500" /></svg>
            <svg width="16" height="16" viewBox="0 0 16 16" fill="none" stroke="#b0b2b5" strokeWidth="1.800"><path d="M1 8h13M7.500 1.500L14 8l-6.500 6.500" /></svg>
            <svg width="16" height="16" viewBox="0 0 16 16" fill="none" stroke="#515559" strokeWidth="2"><path d="M13 4A6.200 6.200 0 1 0 14 9.500" /><path d="M14.500 1v5.800H8.700z" fill="#515559" stroke="none" /></svg>
          </NavIcons>
          <AddressBar>
            <svg width="16" height="16" viewBox="0 0 16 16" fill="none" stroke="#5a5e63" strokeWidth="1.400"><circle cx="8" cy="8" r="6.300" /><path d="M8 7v4.500M8 4.300v1.500" /></svg>
            <Scheme>File</Scheme>
            <Divider $h={16} $c="#b2b5b9" />
            <Url $ls={-0.07}>/Users/sean/Desktop/ga_public/javascript-functions/index.html</Url>
            <svg width="16" height="16" viewBox="0 0 16 16" fill="none" stroke="#505459" strokeWidth="1.500"><path d="M8 1.500l1.900 4.400 4.800.4-3.600 3.100 1.100 4.700L8 11.600l-4.200 2.500 1.100-4.700-3.600-3.100 4.800-.4z" /></svg>
          </AddressBar>
          <Slot $w={47} style={{ paddingLeft: 16 }}>
            <svg width="17" height="17" viewBox="0 0 17 17"><path d="M2 15l1-3 7-7 2 2-7 7z" fill="#4064d2" stroke="#777" /><path d="M8.500 3.500l1-1 1.500 1.500L13 1.500c2-2 4 0 2.500 2L13 6l1.500 1.500-1 1z" fill="#37393c" /></svg>
          </Slot>
          <Divider $h={16} $c="#c6c8ca" />
          <Avatar>A</Avatar>
          <svg width="4" height="16" viewBox="0 0 4 16" fill="#505459"><circle cx="2" cy="3" r="1.500" /><circle cx="2" cy="8" r="1.500" /><circle cx="2" cy="13" r="1.500" /></svg>
        </Toolbar>
        <Viewport>
          <Game>
            <Title $ls={-4}>JavaScript Functions!</Title>
            <Text>
              Welcome! This game is designed to help expose new users to JavaScript functions syntax. To play, simply re-type the functions listed below. Be cautious of your
              <br />
              "grammar"! We hope you find this game to be an educational experience. Thanks for playing!
            </Text>
            <Question>Type in the following command. "let world = hello world Console.log(world)"</Question>
            <Text>Type JavaScript here</Text>
            <Entry value="hi" />
            <Question>Write a function to obtain a sum, type "let x = function sum(){"{"}arr){"{"}x = (b + 2){"}"}"</Question>
            <Text>Type JavaScript here</Text>
            <Entry />
            <Question>
              Below is a function that turns a string in to the number. Try typing it in to the
              <br />
              box below.
            </Question>
            <Text>"let x = function (){"{"}parseInt(2){"}"}"</Text>
            <Text>Hint: in javaScript "2" is not the same as 2; "2" is a string which is a different data type than a number'#')</Text>
            <Entry />
          </Game>
        </Viewport>
      </Window>

      <Shelf />
      <Dock>
        {apps.map((a, i) => <DockItem key={i}><Cell dot={a.dot}>{a.art}</Cell></DockItem>)}
        <DockGap><Divider $h={48} $c="#b5641a" /></DockGap>
        {recents.map((r, i) => <DockItem key={i}><Cell>{r}</Cell></DockItem>)}
      </Dock>
      <Pointer>
        <svg width="14" height="20" viewBox="0 0 14 20"><path d="M1 1v14.500l3.300-3.200 2.300 5.400 2.500-1-2.300-5.300H11.500z" fill="#000" stroke="#fff" strokeWidth="1.200" /></svg>
      </Pointer>
    </Desktop>
  );
}
